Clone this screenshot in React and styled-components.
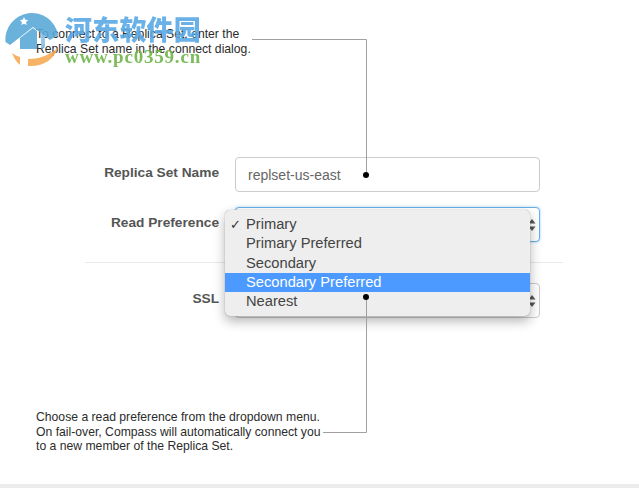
import styled, { createGlobalStyle } from "styled-components";

const GlobalStyle = createGlobalStyle`
  html, body { margin: 0; padding: 0; background: #fff; }
  body { font-family: "Liberation Sans", Arial, sans-serif; }
`;

const Page = styled.div`
  position: relative;
  width: 639px;
  height: 488px;
  overflow: hidden;
  display: flex;
  flex-direction: column;
  background: #fff;
`;

const Note = styled.p`
  margin: 0;
  font-size: 12.2px;
  line-height: 14.5px;
  color: #2b2b2b;
  white-space: pre-line;
`;

const TopNote = styled(Note)`
  padding: 27px 0 0 36px;
  height: 157px;
  box-sizing: border-box;
`;

const Form = styled.div`
  display: flex;
  flex-direction: column;
  height: 252px;
`;

const Row = styled.div`
  display: flex;
  align-items: flex-start;
  gap: 16px;
  margin-bottom: ${(p) => p.$gap || 0}px;
`;

const Label = styled.label`
  width: 219px;
  text-align: right;
  font-size: 13.7px;
  font-weight: 700;
  line-height: 31px;
  color: #555;
`;

const Field = styled.div`
  position: relative;
  width: 305px;
  height: 35px;
  box-sizing: border-box;
  padding-left: 12px;
  display: flex;
  align-items: center;
  font-size: 14px;
  color: #666;
  background: #fff;
  border-radius: 4px;
  border: 1px solid ${(p) => (p.$focus ? "#66afe9" : "#ccc")};
  box-shadow: ${(p) => (p.$focus ? "0 0 3px rgba(102,175,233,0.6)" : "none")};
`;

const Stepper = styled.svg`
  position: absolute;
  right: 2px;
  top: 10px;
`;

const Divider = styled.div`
  width: 478px;
  height: 1px;
  margin: 0 0 20px 85px;
  background: #e9e9e9;
`;

const BottomNote = styled(Note)`
  padding: 1px 0 0 36px;
  height: 75px;
  box-sizing: border-box;
`;

const FooterBand = styled.div`
  height: 4px;
  background: #ececec;
`;

const Menu = styled.ul`
  position: absolute;
  left: 225px;
  top: 210px;
  width: 305px;
  height: 106px;
  margin: 0;
  padding: 5px 0 0;
  list-style: none;
  box-sizing: border-box;
  background: #eee;
  border-radius: 5px;
  box-shadow: 0 0 1px rgba(0, 0, 0, 0.45), 0 5px 12px rgba(0, 0, 0, 0.3);
`;

const MenuItem = styled.li`
  position: relative;
  height: 19.3px;
  padding-left: 21px;
  font-size: 14.7px;
  line-height: 19px;
  color: ${(p) => (p.$active ? "#fff" : "#444")};
  background: ${(p) => (p.$active ? "#4c9aff" : "transparent")};
`;

const Check = styled.span`
  position: absolute;
  left: 5px;
  top: 0;
  font-family: "DejaVu Sans", sans-serif;
  font-size: 13px;
  font-weight: 700;
  color: #333;
`;

const Leaders = styled.svg`
  position: absolute;
  left: 0;
  top: 0;
  pointer-events: none;
`;

const Watermark = styled.div`
  position: absolute;
  left: 4px;
  top: 9px;
  display: flex;
  gap: 3px;
  opacity: 0.9;
  pointer-events: none;
`;

const LogoMark = styled.svg`
  flex: none;
  mix-blend-mode: multiply;
`;

const MarkText = styled.div`
  display: flex;
  flex-direction: column;
  padding-top: 4px;
  mix-blend-mode: multiply;
`;

const MarkTitle = styled.span`
  font-family: "Noto Sans CJK SC", sans-serif;
  font-size: 27px;
  font-weight: 900;
  line-height: 32px;
  letter-spacing: 0.2px;
  color: #5aa9e6;
`;

const MarkUrl = styled.span`
  font-family: "Liberation Serif", serif;
  font-size: 19px;
  font-weight: 700;
  line-height: 24px;
  letter-spacing: 0.8px;
  color: #6fb54a;
`;

const options = ["Primary", "Primary Preferred", "Secondary", "Secondary Preferred", "Nearest"];

function UpDown() {
  return (
    <Stepper width="10" height="14" viewBox="0 0 10 14">
      <path d="M5 1 L8.5 5.5 H1.5 Z" fill="#555" />
      <path d="M5 13 L8.5 8.5 H1.5 Z" fill="#555" />
    </Stepper>
  );
}

function Logo() {
  return (
    <LogoMark width="58" height="58" viewBox="0 0 58 58">
      {/* blue disc, cut along the roof line */}
      <path d="M1.5 33 A26.5 26.5 0 0 1 54 26 L46 31 L29 18 L6 36 Z" fill="#5aa9d8" />
      {/* house body */}
      <path d="M16 29 L29 19 L33 22 V40 H16 Z" fill="#5aa9d8" />
      <path d="M37 24 L41 27 V38 L37 40 Z" fill="#8fc4e4" />
      {/* orange swoosh with the door gap */}
      <path d="M8 44 C11 46 13 47 16 48 V56 C12 53 10 49 8 44 Z" fill="#f7ab55" />
      <path d="M24 50 C34 50 44 47 54 39 C50 50 40 57 27 57 H24 Z" fill="#f7ab55" />
      <path d="M20 8 l1.3 2.7 3 .4 -2.2 2 .6 3 -2.7 -1.4 -2.7 1.4 .6 -3 -2.2 -2 3 -.4 Z" fill="#fff" />
    </LogoMark>
  );
}

export default function App() {
  return (
    <Page>
      <GlobalStyle />
      <TopNote>{"To connect to a Replica Set, enter the\nReplica Set name in the connect dialog."}</TopNote>
      <Form>
        <Row $gap={15}>
          <Label>Replica Set Name</Label>
          <Field>replset-us-east</Field>
        </Row>
        <Row $gap={20}>
          <Label>Read Preference</Label>
          <Field $focus>
            <UpDown />
          </Field>
        </Row>
        <Divider />
        <Row>
          <Label>SSL</Label>
          <Field>
            <UpDown />
          </Field>
        </Row>
      </Form>
      <BottomNote>{"Choose a read preference from the dropdown menu.\nOn fail-over, Compass will automatically connect you\nto a new member of the Replica Set."}</BottomNote>
      <FooterBand />
      <Menu>
        {options.map((o, i) => (
          <MenuItem key={o} $active={i === 3}>
            {i === 0 && <Check>✓</Check>}
            {o}
          </MenuItem>
        ))}
      </Menu>
      <Leaders width="639" height="488" viewBox="0 0 639 488">
        <path d="M252 39.5 H366.5 V174" fill="none" stroke="#a0a0a0" />
        <path d="M366.5 296 V432.5 H323" fill="none" stroke="#a0a0a0" />
        <circle cx="366" cy="175" r="3" fill="#000" />
        <circle cx="366" cy="297" r="3" fill="#000" />
      </Leaders>
      <Watermark>
        <Logo />
        <MarkText>
          <MarkTitle>河东软件园</MarkTitle>
          <MarkUrl>www.pc0359.cn</MarkUrl>
        </MarkText>
      </Watermark>
    </Page>
  );
}
